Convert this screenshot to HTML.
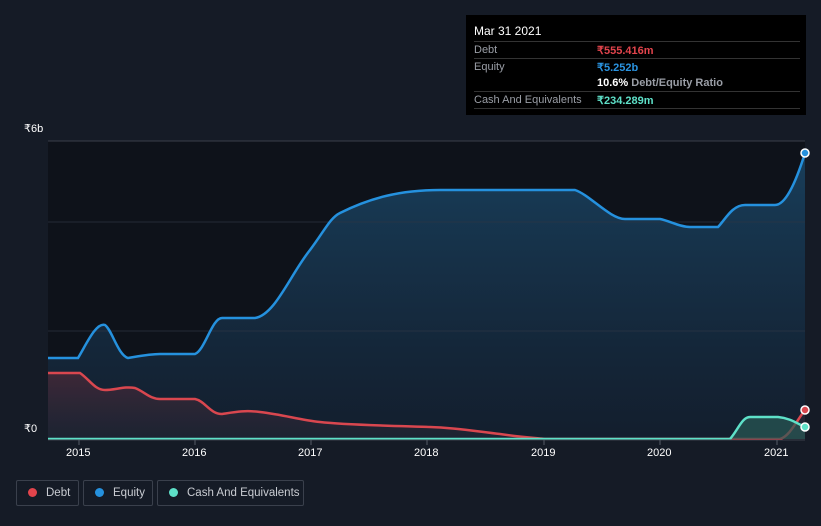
<!DOCTYPE html>
<html><head><meta charset="utf-8"><style>
html,body{margin:0;width:821px;height:526px;overflow:hidden}
body{background:#151b26;font-family:"Liberation Sans",sans-serif;position:relative}
.tt{position:absolute;left:466px;top:15px;width:340px;height:100px;background:#000;color:#fff;font-size:11px}
.tt .r{position:absolute;left:8px;right:6px;border-top:1px solid #333;height:17px}
.lab{color:#9a9ea6;position:absolute;left:0;top:2px}
.val{position:absolute;left:123px;top:2px;font-weight:bold;white-space:nowrap}
.leg{position:absolute;top:480px;height:26px;border:1px solid #3a404c;border-radius:2px;color:#c9ccd2;font-size:11.5px;line-height:24px;box-sizing:border-box;white-space:nowrap}
.leg i{display:inline-block;width:9px;height:9px;border-radius:50%;margin:0 9px 0 11px;vertical-align:-1px}
.ax{position:absolute;color:#fff;font-size:11px;top:447px}
</style></head><body>
<svg width="821" height="526" style="position:absolute;left:0;top:0">
<defs>
<linearGradient id="eg" x1="0" y1="0" x2="0" y2="1"><stop offset="0" stop-color="#1a4666" stop-opacity=".85"/><stop offset="1" stop-color="#16263a" stop-opacity=".6"/></linearGradient>
<linearGradient id="dg" x1="0" y1="0" x2="0" y2="1"><stop offset="0" stop-color="#5a2a38" stop-opacity=".6"/><stop offset="1" stop-color="#2a2a38" stop-opacity=".4"/></linearGradient>
</defs>
<rect x="48" y="141" width="757" height="298" fill="#0e121a"/>
<path d="M48,358 L78,358 C86,345 96,322 105,325 C112,330 118,355 128,358 C140,356 150,354 160,354 L195,354 C205,350 212,318 222,318 L255,318 C275,315 290,275 310,250 C325,230 330,218 340,213 C370,198 400,190 440,190 L575,190 C590,195 610,219 625,219 L660,219 C670,221 680,227 690,227 L718,227 C725,220 732,205 745,205 L775,205 C785,205 795,185 805,153 L805,439 L48,439Z" fill="url(#eg)"/>
<line x1="48" y1="141" x2="805" y2="141" stroke="#3a3f4a"/>
<line x1="48" y1="222" x2="805" y2="222" stroke="#2e3644" stroke-opacity=".7"/>
<line x1="48" y1="331" x2="805" y2="331" stroke="#2e3644" stroke-opacity=".7"/>
<path d="M48,373 L80,373 C90,380 95,390 105,390 C115,390 125,386 135,388 C145,392 150,399 160,399 L195,399 C205,401 210,414 222,414 C235,412 245,410 260,412 C285,415 300,420 320,422 C345,425 400,426 430,427 C460,428 480,432 500,434 C520,437 535,438 545,439 L780,439 C790,436 797,420 805,410 L805,439 L48,439Z" fill="url(#dg)"/>
<path d="M48,358 L78,358 C86,345 96,322 105,325 C112,330 118,355 128,358 C140,356 150,354 160,354 L195,354 C205,350 212,318 222,318 L255,318 C275,315 290,275 310,250 C325,230 330,218 340,213 C370,198 400,190 440,190 L575,190 C590,195 610,219 625,219 L660,219 C670,221 680,227 690,227 L718,227 C725,220 732,205 745,205 L775,205 C785,205 795,185 805,153" fill="none" stroke="#2591de" stroke-width="2.5"/>
<path d="M48,373 L80,373 C90,380 95,390 105,390 C115,390 125,386 135,388 C145,392 150,399 160,399 L195,399 C205,401 210,414 222,414 C235,412 245,410 260,412 C285,415 300,420 320,422 C345,425 400,426 430,427 C460,428 480,432 500,434 C520,437 535,438 545,439 L780,439 C790,436 797,420 805,410" fill="none" stroke="#d9474f" stroke-width="2.5"/>
<path d="M730,439 C738,430 742,417 750,417 L778,417 C790,418 798,424 805,427 L805,439Z" fill="#2a5a55" fill-opacity=".7"/>
<path d="M48,439 L730,439 C738,430 742,417 750,417 L778,417 C790,418 798,424 805,427" fill="none" stroke="#5ee0c8" stroke-width="2.5"/>
<line x1="48" y1="440" x2="805" y2="440" stroke="#3a3f4a"/>
<g stroke="#555b66"><line x1="79" y1="440" x2="79" y2="445"/><line x1="195" y1="440" x2="195" y2="445"/><line x1="311" y1="440" x2="311" y2="445"/><line x1="427" y1="440" x2="427" y2="445"/><line x1="544" y1="440" x2="544" y2="445"/><line x1="660" y1="440" x2="660" y2="445"/><line x1="777" y1="440" x2="777" y2="445"/></g>
<circle cx="805" cy="153" r="4" fill="#2591de" stroke="#fff" stroke-width="1.5"/>
<circle cx="805" cy="410" r="4" fill="#d9474f" stroke="#fff" stroke-width="1.5"/>
<circle cx="805" cy="427" r="4" fill="#5ee0c8" stroke="#fff" stroke-width="1.5"/>
</svg>
<div style="position:absolute;left:24px;top:122px;color:#fff;font-size:11px">₹6b</div>
<div style="position:absolute;left:24px;top:422px;color:#fff;font-size:11px">₹0</div>
<div class="ax" style="left:66px">2015</div><div class="ax" style="left:182px">2016</div><div class="ax" style="left:298px">2017</div><div class="ax" style="left:414px">2018</div><div class="ax" style="left:531px">2019</div><div class="ax" style="left:647px">2020</div><div class="ax" style="left:764px">2021</div>
<div class="tt">
<div style="position:absolute;left:8px;top:9px;font-size:12px">Mar 31 2021</div>
<div class="r" style="top:26px"><span class="lab">Debt</span><span class="val" style="color:#e2444c">₹555.416m</span></div>
<div class="r" style="top:43px"><span class="lab">Equity</span><span class="val" style="color:#2a93e0">₹5.252b</span></div>
<div class="r" style="top:60px;border-top:none"><span class="val" style="color:#fff">10.6% <span style="color:#9a9ea6;font-weight:bold">Debt/Equity Ratio</span></span></div>
<div class="r" style="top:76px"><span class="lab">Cash And Equivalents</span><span class="val" style="color:#5ee0c8">₹234.289m</span></div>
<div class="r" style="top:93px;height:0"></div>
</div>
<div class="leg" style="left:16px;width:63px"><i style="background:#e2444c"></i>Debt</div>
<div class="leg" style="left:83px;width:70px"><i style="background:#2591de"></i>Equity</div>
<div class="leg" style="left:157px;width:147px"><i style="background:#5ee0c8"></i>Cash And Equivalents</div>
</body></html>
